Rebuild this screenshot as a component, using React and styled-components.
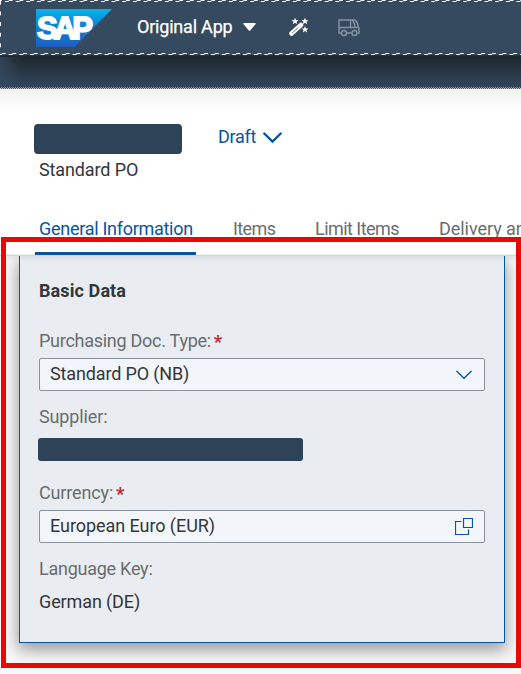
import React from "react";
import styled, { createGlobalStyle } from "styled-components";

const Global = createGlobalStyle`
  * { box-sizing: border-box; }
  body { margin: 0; background: #f7f7f7; font-family: Roboto, "Liberation Sans", sans-serif; }
`;

const Page = styled.div`
  position: relative;
  width: 521px;
  height: 674px;
  overflow: hidden;
  display: flex;
  flex-direction: column;
  background: #f8f8f8;
  font-size: 18px;
  color: #32363a;
`;

const Text = styled.span`
  display: block;
  white-space: nowrap;
  line-height: 22px;
  letter-spacing: ${(p) => p.$track || 0}px;
`;

const ShellBar = styled.header`
  flex: none;
  height: 55px;
  display: flex;
  align-items: flex-start;
  padding-left: 36px;
  color: #fff;
  background-color: #354a5f;
  background-image:
    linear-gradient(90deg, #fff 4px, transparent 4px),
    linear-gradient(90deg, #fff 4px, transparent 4px),
    linear-gradient(90deg, #fff 4px, transparent 4px),
    linear-gradient(90deg, #fff 4px, transparent 4px),
    linear-gradient(180deg, #fff 4px, transparent 4px);
  background-size: 10.667px 1px, 10.667px 1px, 10.667px 1px, 10.667px 1px, 1px 10.667px;
  background-position: 8.7px 0, 5px 1px, 1.7px 53px, 8.7px 54px, 0 0.8px;
  background-repeat: repeat-x, repeat-x, repeat-x, repeat-x, repeat-y;
`;

const Logo = styled.svg`
  flex: none;
  width: 76px;
  height: 38px;
  margin-top: 9px;
`;

const AppTitle = styled(Text)`
  width: 106px;
  margin: 16px 0 0 25px;
  -webkit-text-stroke: 0.25px #fff;
`;

const BarIcon = styled.svg`
  flex: none;
  margin: ${(p) => p.$top}px 0 0 ${(p) => p.$left}px;
`;

const ShadowBand = styled.div`
  flex: none;
  height: 34px;
  background:
    repeating-linear-gradient(90deg, #33434f 0 1px, #8a949c 1px 2px) 0 32px / 100% 1px no-repeat,
    repeating-linear-gradient(90deg, #c2c6c9 0 1px, #4d5963 1px 2px) 0 33px / 100% 1px no-repeat,
    linear-gradient(90deg, rgba(53, 74, 95, 0.8), transparent 22px) 0 2px / 100% 30px no-repeat,
    linear-gradient(180deg, #2a333c 0, #1c252d 2px, #233039 10px, #2b3b4b 20px, #304358 32px);
`;

const ObjectHeader = styled.section`
  flex: none;
  height: 123px;
  display: grid;
  grid-template-columns: 184px 1fr;
  grid-template-rows: 65px 1fr;
  padding-left: 34px;
  background: linear-gradient(180deg, #f3f3f3, #fff 25px);
`;

const Redacted = styled.div`
  width: ${(p) => p.$w}px;
  height: ${(p) => p.$h}px;
  border-radius: 4px;
  background: #2f4358;
`;

const TitleSlot = styled.div`
  padding-top: 35px;
`;

const Status = styled.div`
  display: flex;
  align-items: flex-start;
  padding-top: 37px;
  color: #0854a0;
`;

const Subtitle = styled(Text)`
  padding: 5px 0 0 5px;
`;

const Tabs = styled.nav`
  position: relative;
  z-index: 1;
  flex: none;
  height: 44px;
  display: flex;
  padding-left: 35px;
  background: #fff;
  box-shadow: inset 0 -1px #d3d5d7, inset 0 -2px #f0f0f0, 0 3px 3px rgba(0, 0, 0, 0.06);
`;

const Tab = styled.div`
  flex: none;
  height: 43px;
  width: ${(p) => p.$w}px;
  margin-right: ${(p) => p.$gap || 0}px;
  padding: 6px 0 0 4px;
  color: ${(p) => (p.$active ? "#0854a0" : "#6a6d70")};
  border-bottom: 3px solid ${(p) => (p.$active ? "#0854a0" : "transparent")};
  border-radius: 2px 2px 0 0;
`;

const Card = styled.section`
  flex: none;
  width: 486px;
  height: 387px;
  margin-left: 19px;
  padding: 24px 19px 0;
  border: 1px solid #0854a0;
  border-top: 0;
  background: #e9edf1;
  box-shadow: 0 6px 15px 1px rgba(0, 0, 0, 0.38);
`;

const CardTitle = styled.h2`
  margin: 0 0 28px;
  font-size: 18px;
  line-height: 22px;
  font-weight: 700;
  letter-spacing: 0.1px;
`;

const Field = styled.div`
  height: 76px;
`;

const Label = styled.div`
  display: flex;
  gap: 3px;
  height: 28px;
  color: #6a6d70;
`;

const Star = styled.span`
  margin-top: 1px;
  font-size: 18px;
  line-height: 22px;
  font-weight: 900;
  color: #c02f38;
`;

const Input = styled.div`
  width: 446px;
  height: 33px;
  display: flex;
  justify-content: space-between;
  padding: 4px 11px 0 10px;
  border: 1px solid #89919a;
  border-radius: 2px;
  background: #f2f6fb;
`;

const Supplier = styled(Redacted)`
  margin: 4px 0 0 -1px;
  border-radius: 3px;
`;

const PlainValue = styled(Text)`
  padding-top: 5px;
`;

const Highlight = styled.div`
  position: absolute;
  z-index: 2;
  left: 1px;
  top: 237px;
  width: 520px;
  height: 431px;
  border: 5px solid #eb0707;
`;

const starPath = "M0-3.5 1-1.1 3.5-1 1.5.6 2.2 3 0 1.6-2.2 3-1.5.6-3.5-1-1-1.1Z";

export default function App() {
  return (
    <Page>
      <Global />
      <ShellBar>
        <Logo viewBox="0 0 76 38">
          <defs>
            <linearGradient id="sap" x1="0" y1="0" x2="0" y2="1">
              <stop offset="0" stopColor="#04b4ed" />
              <stop offset="0.4" stopColor="#0d87d5" />
              <stop offset="1" stopColor="#1f5ec0" />
            </linearGradient>
          </defs>
          <path d="M0 0H76L38.500 38H0Z" fill="url(#sap)" />
          <text x="1" y="29.500" textLength="56" lengthAdjust="spacing" fontFamily="Liberation Sans, sans-serif" fontSize="31" fontWeight="700" fill="#fff" stroke="#fff" strokeWidth="1.800">SAP</text>
        </Logo>
        <AppTitle $track={-0.2}>Original App</AppTitle>
        <BarIcon $top={23} $left={0} width="13" height="8" viewBox="0 0 13 8">
          <path d="M.8 0H12.200Q13 .3 12.400 1.200L7.200 7.500Q6.500 8.200 5.800 7.500L.6 1.200Q0 .3.800 0Z" fill="#fff" />
        </BarIcon>
        <BarIcon $top={17} $left={33} width="20" height="20" viewBox="0 0 20 20">
          <path d="M2.500 16.500 12 8" stroke="#fff" strokeWidth="4.500" strokeLinecap="round" />
          <path d="M3.500 15.800 9 10.800" stroke="#5c6d7e" strokeWidth="1" strokeLinecap="round" />
          <path d={starPath} transform="translate(6 4.200)" fill="#fff" />
          <path d={starPath} transform="translate(16 4.200)" fill="#fff" />
          <path d={starPath} transform="translate(16 12.500)" fill="#fff" />
        </BarIcon>
        <BarIcon $top={19} $left={29} width="22" height="18" viewBox="0 0 22 18" fill="none" stroke="#8793a0" strokeWidth="1.400">
          <path d="M3.500 14H1V1H16.500Q19.500 2 20 7.500L21 9V14H19.500M8.500 14H13.500M1 8.500H20M12.500 1V8.500M14.500 1Q16.500 4 17 8" />
          <circle cx="6" cy="14" r="2.500" />
          <circle cx="16.500" cy="14" r="2.500" />
        </BarIcon>
      </ShellBar>
      <ShadowBand />
      <ObjectHeader>
        <TitleSlot><Redacted $w={148} $h={30} /></TitleSlot>
        <Status>
          <Text $track={-0.25}>Draft</Text>
          <BarIcon $top={6} $left={7} width="19" height="12" viewBox="0 0 19 12" fill="none">
            <path d="M1.300 1.500 9.500 9.500 17.700 1.500" stroke="#0854a0" strokeWidth="2.400" strokeLinecap="round" />
          </BarIcon>
        </Status>
        <Subtitle $track={-0.12}>Standard PO</Subtitle>
      </ObjectHeader>
      <Tabs>
        <Tab $active $w={161} $gap={33}><Text $track={-0.28}>General Information</Text></Tab>
        <Tab $w={82}><Text $track={-0.6}>Items</Text></Tab>
        <Tab $w={124}><Text $track={-0.55}>Limit Items</Text></Tab>
        <Tab $w={180}><Text $track={-0.05}>Delivery and Invoice</Text></Tab>
      </Tabs>
      <Card>
        <CardTitle>Basic Data</CardTitle>
        <Field>
          <Label><Text $track={-0.27}>Purchasing Doc. Type:</Text><Star>*</Star></Label>
          <Input>
            <Text $track={-0.14}>Standard PO (NB)</Text>
            <BarIcon $top={7} $left={0} width="18" height="10" viewBox="0 0 18 10" fill="none">
              <path d="M1.500 1 9 8.300 16.500 1" stroke="#0854a0" strokeWidth="1.300" />
            </BarIcon>
          </Input>
        </Field>
        <Field>
          <Label><Text $track={-0.12}>Supplier:</Text></Label>
          <Supplier $w={265} $h={23} />
        </Field>
        <Field>
          <Label><Text $track={-0.15}>Currency:</Text><Star>*</Star></Label>
          <Input>
            <Text $track={-0.06}>European Euro (EUR)</Text>
            <BarIcon $top={3} $left={0} width="18" height="18" viewBox="0 0 18 18" fill="none" stroke="#0854a0" strokeWidth="1.200">
              <path d="M8.500.5H17.500V9.500H8.500ZM6.500 3.500H.5V16.500H13.500V11.500" />
            </BarIcon>
          </Input>
        </Field>
        <Field>
          <Label><Text $track={-0.25}>Language Key:</Text></Label>
          <PlainValue $track={-0.12}>German (DE)</PlainValue>
        </Field>
      </Card>
      <Highlight />
    </Page>
  );
}
